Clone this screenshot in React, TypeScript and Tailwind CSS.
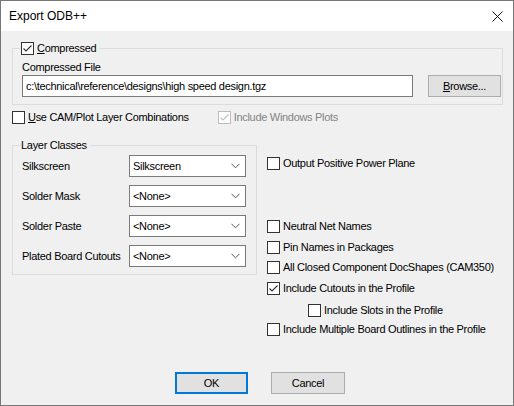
import React from 'react';

const font = { fontFamily: '"Liberation Sans", Arial, sans-serif' };

function CheckBox({ checked = false, disabled = false }: { checked?: boolean; disabled?: boolean }) {
  return (
    <span
      className={
        'inline-flex w-[13px] h-[13px] shrink-0 border bg-white ' +
        (disabled ? 'border-[#bcbcbc]' : 'border-[#333333]')
      }
    >
      {checked && (
        <svg width="11" height="11" viewBox="0 0 11 11">
          <path
            d="M1.5 5.5 L4 8 L9.5 2.5"
            fill="none"
            stroke={disabled ? '#bcbcbc' : '#333333'}
            strokeWidth="1.1"
          />
        </svg>
      )}
    </span>
  );
}

function CheckRow({
  label,
  checked,
  disabled,
  className = '',
}: {
  label: React.ReactNode;
  checked?: boolean;
  disabled?: boolean;
  className?: string;
}) {
  return (
    <div className={'flex items-center h-[13px] gap-[3px] ' + className}>
      <CheckBox checked={checked} disabled={disabled} />
      <span className={'leading-[13px] ' + (disabled ? 'text-[#838383]' : 'text-black')}>{label}</span>
    </div>
  );
}

function Select({ value }: { value: string }) {
  return (
    <div className="flex items-center justify-between w-[117px] h-[22px] bg-white border border-[#7a7a7a] pl-[3px] pr-[5px]">
      <span>{value}</span>
      <svg width="9" height="6" viewBox="0 0 9 6">
        <path d="M0.5 0.8 L4.5 4.8 L8.5 0.8" fill="none" stroke="#555" strokeWidth="1" />
      </svg>
    </div>
  );
}

export default function App() {
  const layerRows = [
    { label: 'Silkscreen', value: 'Silkscreen' },
    { label: 'Solder Mask', value: '<None>' },
    { label: 'Solder Paste', value: '<None>' },
    { label: 'Plated Board Cutouts', value: '<None>' },
  ];

  return (
    <div
      className="w-[514px] h-[406px] flex flex-col border border-[#777777] bg-[#f0f0f0] text-[11px] tracking-[-0.3px] text-black"
      style={font}
    >
      {/* Title bar */}
      <div className="h-[30px] bg-white flex items-center justify-between pl-[8px] pr-[10px] shrink-0">
        <span className="text-[12px] tracking-normal">Export ODB++</span>
        <svg width="11" height="11" viewBox="0 0 11 11">
          <path d="M0.5 0.5 L10.5 10.5 M10.5 0.5 L0.5 10.5" stroke="#111" strokeWidth="1" />
        </svg>
      </div>

      <div className="flex-1 flex flex-col pl-[11px]">
        {/* Compressed group */}
        <fieldset className="mt-[11px] w-[491px] border border-[#dcdcdc] pl-[8px] pr-[1px] pb-[7px]">
          <legend className="pr-[4px]">
            <div className="flex items-center gap-[3px] h-[13px]">
              <CheckBox checked />
              <span>
                <span className="underline">C</span>ompressed
              </span>
            </div>
          </legend>
          <div className="mt-[6px] leading-[13px] pl-[1px]">Compressed File</div>
          <div className="flex items-center mt-[1px] pl-[1px]">
            <div className="w-[391px] h-[22px] bg-white border border-[#7a7a7a] flex items-center pl-[3px]">
              c:\technical\reference\designs\high speed design.tgz
            </div>
            <button className="ml-[15px] w-[73px] h-[22px] bg-[#e1e1e1] border border-[#adadad] flex items-center justify-center">
              <span>
                <span className="underline">B</span>rowse...
              </span>
            </button>
          </div>
        </fieldset>

        <div className="flex mt-[6px] items-center">
          <CheckRow
            label={
              <span>
                <span className="underline">U</span>se CAM/Plot Layer Combinations
              </span>
            }
          />
          <CheckRow label="Include Windows Plots" checked disabled className="ml-[29px]" />
        </div>

        <div className="flex mt-[15px]">
          {/* Layer Classes group */}
          <fieldset className="w-[245px] h-fit border border-[#dcdcdc] pl-[8px] pb-[7px]">
            <legend className="pr-[3px] leading-[13px]">Layer Classes</legend>
            <div className="flex flex-col gap-[8px] mt-[3px]">
              {layerRows.map((r) => (
                <div key={r.label} className="flex items-center h-[22px]">
                  <span className="w-[108px] pl-[1px]">{r.label}</span>
                  <Select value={r.value} />
                </div>
              ))}
            </div>
          </fieldset>

          {/* Options column */}
          <div className="flex flex-col ml-[10px] pt-[18px]">
            <CheckRow label="Output Positive Power Plane" />
            <CheckRow label="Neutral Net Names" className="mt-[50px]" />
            <CheckRow label="Pin Names in Packages" className="mt-[8px]" />
            <CheckRow label="All Closed Component DocShapes (CAM350)" className="mt-[7px]" />
            <CheckRow label="Include Cutouts in the Profile" checked className="mt-[8px]" />
            <CheckRow label="Include Slots in the Profile" className="mt-[9px] ml-[41px]" />
            <CheckRow label="Include Multiple Board Outlines in the Profile" className="mt-[6px]" />
          </div>
        </div>

        <div className="flex mt-auto mb-[11px] ml-[163px] gap-[23px]">
          <button className="w-[73px] h-[22px] bg-[#e1e1e1] border-2 border-[#0078d7]">OK</button>
          <button className="w-[74px] h-[22px] bg-[#e1e1e1] border border-[#adadad]">Cancel</button>
        </div>
      </div>
    </div>
  );
}
